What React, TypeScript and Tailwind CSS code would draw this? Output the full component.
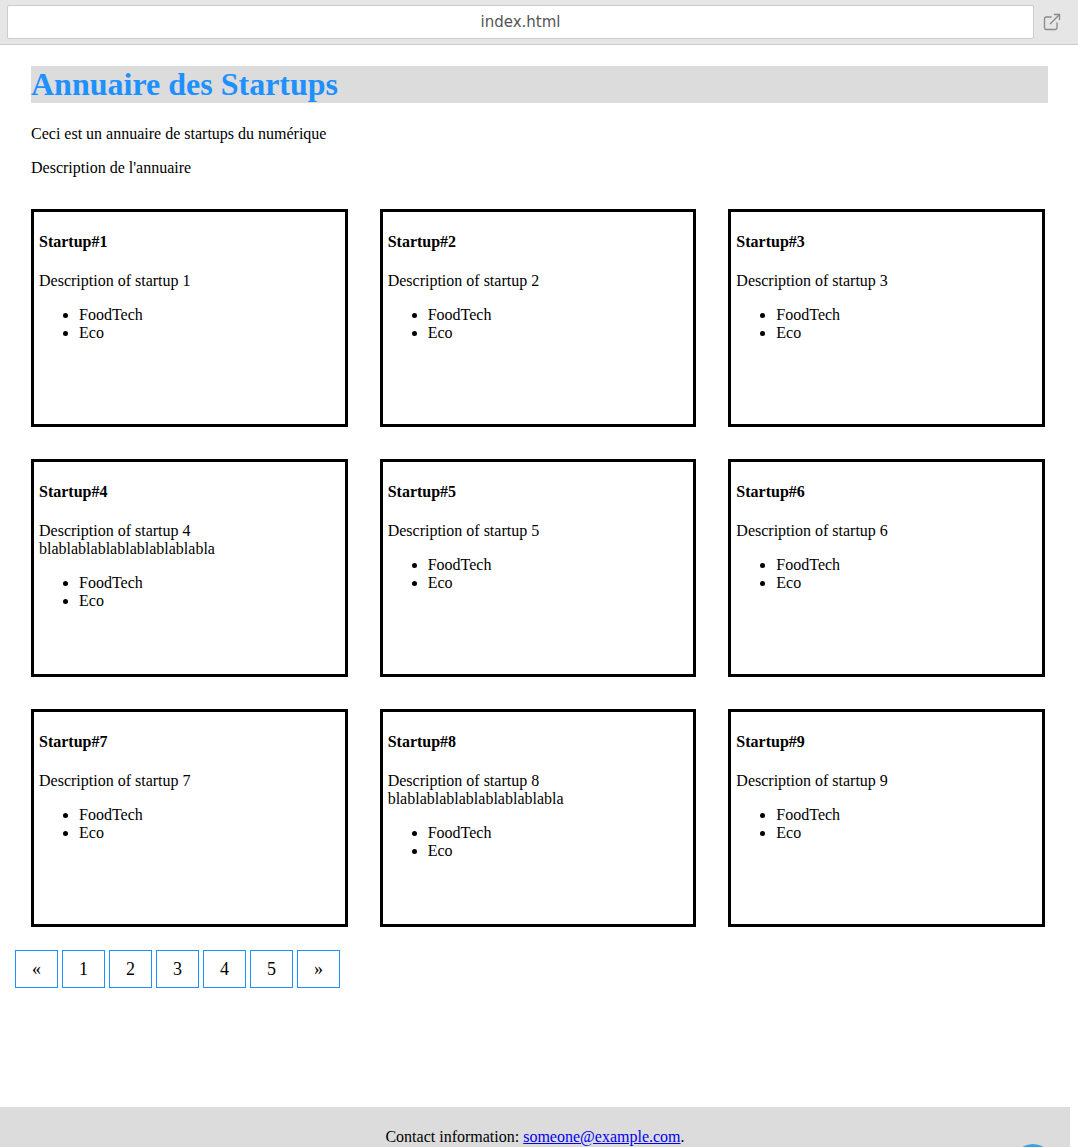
import React from 'react';
import { ExternalLink } from 'lucide-react';

type Startup = { id: number; desc: string; extra?: string; tags: string[] };

const startups: Startup[] = [
  { id: 1, desc: 'Description of startup 1', tags: ['FoodTech', 'Eco'] },
  { id: 2, desc: 'Description of startup 2', tags: ['FoodTech', 'Eco'] },
  { id: 3, desc: 'Description of startup 3', tags: ['FoodTech', 'Eco'] },
  { id: 4, desc: 'Description of startup 4', extra: 'blablablablablablablablabla', tags: ['FoodTech', 'Eco'] },
  { id: 5, desc: 'Description of startup 5', tags: ['FoodTech', 'Eco'] },
  { id: 6, desc: 'Description of startup 6', tags: ['FoodTech', 'Eco'] },
  { id: 7, desc: 'Description of startup 7', tags: ['FoodTech', 'Eco'] },
  { id: 8, desc: 'Description of startup 8', extra: 'blablablablablablablablabla', tags: ['FoodTech', 'Eco'] },
  { id: 9, desc: 'Description of startup 9', tags: ['FoodTech', 'Eco'] },
];

const pages = ['«', '1', '2', '3', '4', '5', '»'];

const StartupCard = ({ s }: { s: Startup }) => (
  <div className="h-[218px] border-[3px] border-black px-[5px] text-[16px] leading-[18px] text-black">
    <h4 className="mt-[21px] font-bold">Startup#{s.id}</h4>
    <p className="mt-[21px]">
      {s.desc}
      {s.extra && (
        <>
          <br />
          {s.extra}
        </>
      )}
    </p>
    <ul className="mt-4 list-disc pl-10">
      {s.tags.map((t) => (
        <li key={t}>{t}</li>
      ))}
    </ul>
  </div>
);

const App: React.FC = () => {
  return (
    <div className="relative w-[1078px] h-[1147px] overflow-hidden bg-white font-['Liberation_Serif',serif]">
      {/* Browser bar */}
      <div className="h-[45px] bg-[#e6e6e6] border-b border-[#cccccc] flex items-center pl-[7px] pr-[16px] gap-[8px]">
        <div className="flex-1 h-[34px] bg-white border border-[#cccccc] rounded-[2px] flex items-center justify-center font-['DejaVu_Sans',sans-serif] text-[15px] text-[#555555]">
          index.html
        </div>
        <ExternalLink size={20} strokeWidth={1.6} className="text-[#8a8a8a]" />
      </div>

      {/* Page */}
      <div className="w-[1070px] flex flex-col">
        <main className="pl-[31px] pr-[22px]">
          <h1 className="mt-[21px] bg-[#dcdcdc] text-[#1e90ff] text-[32px] leading-[37px] font-bold">
            Annuaire des Startups
          </h1>
          <p className="mt-[22px] text-[16px] leading-[18px]">Ceci est un annuaire de startups du numérique</p>
          <p className="mt-4 text-[16px] leading-[18px]">Description de l'annuaire</p>

          <div className="mt-[32px] grid grid-cols-3 gap-x-[32px] gap-y-[32px] w-[1014px]">
            {startups.map((s) => (
              <StartupCard key={s.id} s={s} />
            ))}
          </div>
        </main>

        <div className="mt-[23px] ml-[15px] flex gap-[4px]">
          {pages.map((p) => (
            <a
              key={p}
              href="#"
              className="h-[38px] w-[43px] border border-[#1e90ff] flex items-center justify-center text-[18px] text-black"
            >
              {p}
            </a>
          ))}
        </div>

        <footer className="mt-[119px] h-[60px] bg-[#dcdcdc] pt-[21px] text-center text-[16px] leading-[18px]">
          Contact information:{' '}
          <a href="#" className="text-[#0000ee] underline">
            someone@example.com
          </a>
          .
        </footer>
      </div>

      {/* Scroll to top button */}
      <div className="absolute left-[1013px] top-[1144px] w-[40px] h-[40px] rounded-full bg-[#3fa0e0]" />
    </div>
  );
};

export default App;
